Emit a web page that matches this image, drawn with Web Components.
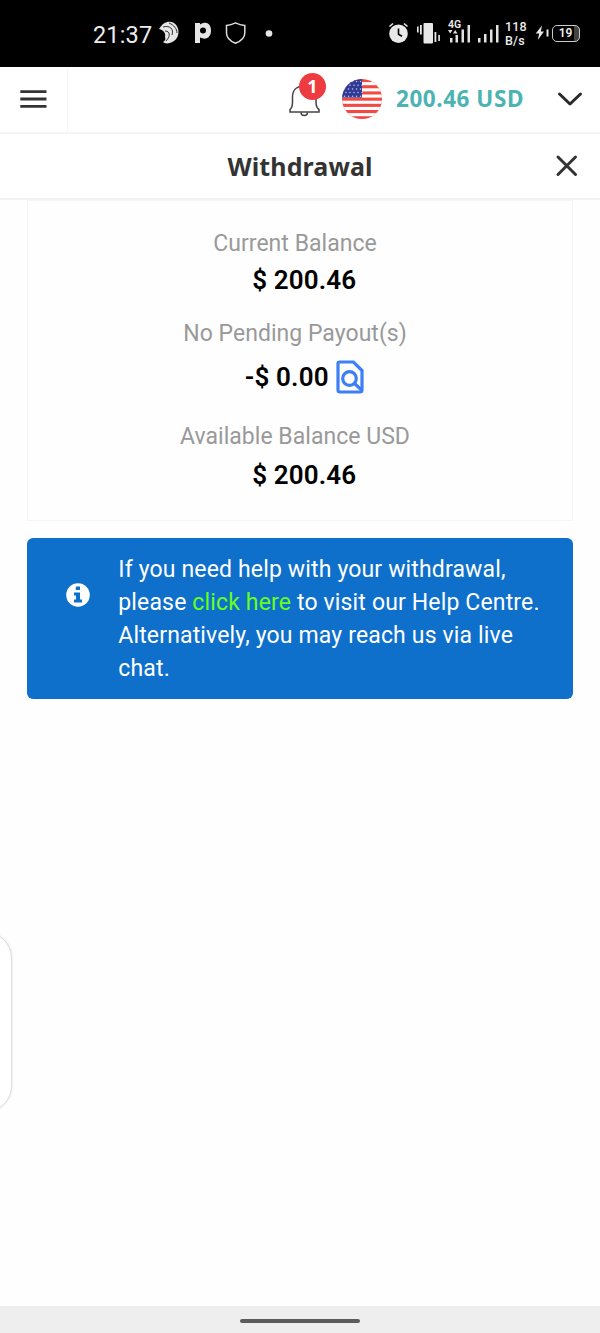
<!DOCTYPE html>
<html lang="en">
<head>
<meta charset="utf-8">
<title>Withdrawal</title>
<style>
  html, body {
    margin: 0;
    background: #fefefe;
    font-family: Roboto, sans-serif;
  }
</style>
</head>
<body>
<withdrawal-page></withdrawal-page>

<script>
// status-bar

class StatusBar extends HTMLElement {
  connectedCallback() {
    this._root = this.attachShadow({ mode: "open" });
    this._root.innerHTML = `
      <span class="time">${this.getAttribute("time")}</span>
      <svg class="apps" width="120" height="40" viewBox="0 0 120 40">
        <path d="M-1 16C3 9 9 7 14 10C20 14 20 24 14 28C10 31 5 31 3 29C5 28 6 26 5 24C6 21 4 17 -1 16Z" fill="#e6e6e6"/>
        <path fill-rule="evenodd" d="M35 10H40V11.500C46 7.500 51 10.500 51 17.500C51 24.500 46 27.500 40 24.500V30H35ZM43 14.500A3 3 0 1 0 43 20.500A3 3 0 1 0 43 14.500Z" fill="#e6e6e6"/>
        <circle cx="109" cy="20.500" r="3.3" fill="#e6e6e6"/>
        <path d="M3 14C10 12 14 16 12 22M9 10C14 12 17 16 17 20M5 18C10 18 11 23 6 28" fill="none" stroke="#000" stroke-width=".8"/>
        <path d="M75.500 9.800Q80 12 84.800 12.500V20C84.800 25 80 28.500 75.500 30.300C71 28.500 66.500 25 66.500 20V12.500Q71 12 75.500 9.800Z" fill="none" stroke="#ddd" stroke-width="1.500"/>
      </svg>
      <span class="space"></span>
      <svg class="alarm" width="60" height="30" viewBox="0 0 60 30">
        <g fill="#e8e8e8">
          <circle cx="10.500" cy="14.700" r="9.300"/>
          <rect x="35.500" y="4" width="9.500" height="20.500" rx="1"/>
          <rect x="29" y="7.500" width="1.600" height="6"/>
          <rect x="32" y="6" width="1.800" height="9.500"/>
          <rect x="46.500" y="13" width="1.800" height="10"/>
          <rect x="50.300" y="16" width="1.600" height="6"/>
        </g>
        <path d="M1.500 7.500L5 4.500M16 4.500L19.500 7.500" stroke="#e8e8e8" stroke-width="1.600"/>
        <path d="M10.500 9.500V15.200L14 17.200" fill="none" stroke="#000" stroke-width="1.600"/>
      </svg>
      <div class="signal">
        <b>4G</b>
        <svg width="54" height="30" viewBox="0 0 54 30">
          <g fill="#e2e2e2">
            <path d="M0 11H4.500L2.200 14.500ZM5 14.500H9.500L7.200 11Z"/>
            <rect x="2" y="19" width="2.500" height="4.500"/>
            <rect x="7.500" y="16" width="2.500" height="7.500"/>
            <rect x="13.500" y="10.500" width="2.500" height="13"/>
            <rect x="19.500" y="6" width="2.500" height="17.500"/>
            <rect x="30" y="19" width="2.500" height="4.500"/>
            <rect x="36" y="15" width="2.500" height="8.500"/>
            <rect x="42" y="10.500" width="2.500" height="13"/>
            <rect x="48" y="6" width="2.500" height="17.500"/>
          </g>
        </svg>
      </div>
      <div class="rate"><span>118</span><span>B/s</span></div>
      <svg class="bolt" width="16" height="20" viewBox="0 0 16 20">
        <path d="M6 2.500L-.3 10.500H3.200L1.800 17L8 8.500H4.800Z" fill="#e8e8e8"/>
        <rect x="10.500" y="6.500" width="2" height="7" fill="#e8e8e8"/>
      </svg>
      <div class="battery">${this.getAttribute("battery")}</div>
      <style>
        :host {
          background: #000;
          box-sizing: border-box;
          color: #ececec;
          display: flex;
          align-items: center;
          height: 66.5px;
          padding: 0 20px 0 93px;
        }

        svg {
          display: block;
          flex: none;
          overflow: visible;
        }

        .time {
          font-size: 23.5px;
          letter-spacing: 0.15px;
          width: 60px;
          margin-top: 3px;
          white-space: nowrap;
        }

        .apps {
          margin-left: 7px;
        }

        .space {
          flex: 1;
        }

        .alarm {
          margin-top: 2px;
        }

        .signal {
          display: grid;
          width: 57px;
          margin-top: 2px;
        }

        .signal > * {
          grid-area: 1 / 1;
        }

        .signal b {
          font-size: 10.5px;
          line-height: 11px;
          font-weight: 600;
        }

        .rate {
          display: flex;
          flex-direction: column;
          font-size: 12.5px;
          font-weight: 500;
          letter-spacing: 0.2px;
          line-height: 13.3px;
          width: 31px;
          margin-top: 1px;
        }

        .battery {
          border: 1.5px solid #ccc;
          border-radius: 5px;
          box-sizing: border-box;
          background: linear-gradient(90deg, transparent 80%, #444 80%);
          font-size: 12px;
          font-weight: 600;
          line-height: 15px;
          width: 28px;
          height: 17px;
          padding-right: 1px;
          text-align: center;
        }
      </style>
    `;
  }
}

customElements.define("status-bar", StatusBar);

// account-header

class AccountHeader extends HTMLElement {
  connectedCallback() {
    var stripes = "";
    for (var i = 0; i < 6; i++) {
      stripes += `<rect y="${3.1 + i * 6.2}" width="40" height="3.1" fill="#fff"/>`;
    }
    var stars = "";
    for (var r = 0; r < 5; r++) {
      for (var c = 0; c < 5; c++) {
        stars += `<circle cx="${2.5 + c * 4 + (r % 2) * 1.5}" cy="${2.5 + r * 3.7}" r=".75"/>`;
      }
    }
    this._root = this.attachShadow({ mode: "open" });
    this._root.innerHTML = `
      <div class="menu">
        <svg width="28" height="20" viewBox="0 0 28 20"><path d="M.3 2.700H26.500M.3 10H26.500M.3 17.300H26.500" stroke="#333" stroke-width="2.800"/></svg>
      </div>
      <div class="bell">
        <svg width="34" height="38" viewBox="0 0 34 38" fill="none" stroke="#444" stroke-width="1.500">
          <path d="M2 32V29.500C4 28 4.500 26 4.500 22V17C4.500 10 9 6 16 6S28 10 28 17V22C28 26 28.500 28 31 29.500V32Z"/>
          <path d="M13 32.500C13 36.500 19.500 36.500 19.500 32.500"/>
        </svg>
        <span>${this.getAttribute("alerts")}</span>
      </div>
      <svg class="flag" width="40" height="40" viewBox="0 0 40 40">
        <rect width="40" height="40" fill="#f24a43"/>
        ${stripes}
        <rect width="20" height="18.600" fill="#2f3a94"/>
        <g fill="#c5c9e8">${stars}</g>
      </svg>
      <span class="balance">${this.getAttribute("balance")}</span>
      <svg width="26" height="16" viewBox="0 0 26 16"><path d="M2.500 3L13 13L23.500 3" fill="none" stroke="#292929" stroke-width="3" stroke-linecap="round" stroke-linejoin="round"/></svg>
      <style>
        :host {
          background: #fff;
          border-bottom: 2px solid #f5f5f5;
          box-sizing: border-box;
          display: flex;
          align-items: center;
          height: 67px;
          padding-right: 17px;
        }

        svg {
          display: block;
          flex: none;
        }

        .menu {
          align-self: stretch;
          border-right: 1.5px solid #f5f5f5;
          box-sizing: border-box;
          display: flex;
          align-items: center;
          padding-left: 20px;
          margin-right: auto;
          width: 68px;
        }

        .bell {
          position: relative;
          margin-right: 20px;
        }

        .bell span {
          background: #ee3b40;
          border-radius: 50%;
          color: #fff;
          font: 700 18px/27px "Noto Sans", sans-serif;
          width: 27px;
          height: 27px;
          position: absolute;
          left: 11px;
          top: -7px;
          text-align: center;
        }

        .flag {
          border-radius: 50%;
          margin-right: 14px;
        }

        .balance {
          color: #4bb4b3;
          font: 700 22.5px/30px "Noto Sans", sans-serif;
          letter-spacing: 0.55px;
          margin-top: -1px;
          width: 161px;
          white-space: nowrap;
        }
      </style>
    `;
  }
}

customElements.define("account-header", AccountHeader);

// page-title

class PageTitle extends HTMLElement {
  connectedCallback() {
    this._root = this.attachShadow({ mode: "open" });
    this._root.innerHTML = `
      <h1><slot></slot></h1>
      <svg width="24" height="24" viewBox="0 0 24 24"><path d="M3 3L20.500 20.500M20.500 3L3 20.500" stroke="#333" stroke-width="3" stroke-linecap="round"/></svg>
      <style>
        :host {
          background: #fff;
          border-bottom: 2px solid #f3f3f3;
          box-sizing: border-box;
          display: grid;
          grid-template-columns: 1fr auto 1fr;
          align-items: center;
          height: 66px;
          padding-right: 21px;
          padding-left: 21px;
        }

        h1 {
          color: #333;
          font: 700 25px/34px "Noto Sans", sans-serif;
          grid-column: 2;
          letter-spacing: 0.1px;
          margin: 0;
        }

        svg {
          justify-self: end;
        }
      </style>
    `;
  }
}

customElements.define("page-title", PageTitle);

// balance-item

class BalanceItem extends HTMLElement {
  connectedCallback() {
    this._root = this.attachShadow({ mode: "open" });
    this._root.innerHTML = `
      <p class="label">${this.getAttribute("label")}</p>
      <p class="amount"><span>${this.getAttribute("amount")}</span><slot></slot></p>
      <style>
        :host {
          display: block;
        }

        p {
          margin: 0;
        }

        .label {
          color: #999;
          font-size: 23px;
          letter-spacing: 0.03px;
          line-height: 30px;
          padding-right: 10px;
          padding-top: 1px;
          text-align: center;
        }

        .amount {
          box-sizing: border-box;
          color: #000;
          display: flex;
          align-items: center;
          justify-content: center;
          font-size: 26px;
          font-weight: 600;
          gap: 7px;
          height: var(--amount-height, 43px);
          letter-spacing: 0.15px;
          padding-bottom: 2px;
          padding-left: 8.5px;
        }
      </style>
    `;
  }
}

customElements.define("balance-item", BalanceItem);

// help-notice

class HelpNotice extends HTMLElement {
  connectedCallback() {
    this._root = this.attachShadow({ mode: "open" });
    this._root.innerHTML = `
      <svg width="24" height="24" viewBox="0 0 24 24">
        <circle cx="12" cy="12" r="11.800" fill="#fff"/>
        <path d="M9.800 3.500H14V7H9.800ZM8 9.500H14V16.500H16V19.500H8V16.500H10V12.500H8Z" fill="#0e70cb"/>
      </svg>
      <p><slot></slot></p>
      <style>
        :host {
          background: #0e70cb;
          border-radius: 6px;
          box-sizing: border-box;
          color: #fff;
          display: flex;
          align-items: flex-start;
          height: 161px;
          padding: 16px 0 0 39px;
        }

        svg {
          flex: none;
          margin-top: 29px;
        }

        p {
          font-size: 23px;
          letter-spacing: 0.15px;
          line-height: 32.7px;
          margin: 0.4px 0 0 28.3px;
          white-space: nowrap;
        }

        ::slotted(a) {
          color: #66ff1c;
          text-decoration: none;
        }
      </style>
    `;
  }
}

customElements.define("help-notice", HelpNotice);

// withdrawal-page

class WithdrawalPage extends HTMLElement {
  connectedCallback() {
    this._root = this.attachShadow({ mode: "open" });
    this._root.innerHTML = `
      <status-bar time="21:37" battery="19"></status-bar>
      <account-header alerts="1" balance="200.46 USD"></account-header>
      <page-title>Withdrawal</page-title>
      <main>
        <section>
          <balance-item label="Current Balance" amount="$ 200.46"></balance-item>
          <balance-item class="pending" label="No Pending Payout(s)" amount="-$ 0.00">
            <svg width="28" height="34" viewBox="0 0 28 34" fill="none" stroke="#3d7ff5" stroke-width="3.200">
              <path d="M3.500 2H17.500L26 10.500V30Q26 32 24 32H4Q2 32 2 30V3.500Q2 2 3.500 2Z"/>
              <circle cx="13.500" cy="18.500" r="6.800"/>
              <path d="M18 23L26 30.500"/>
            </svg>
          </balance-item>
          <balance-item class="available" label="Available Balance USD" amount="$ 200.46"></balance-item>
        </section>
        <help-notice>If you need help with your withdrawal,<br>please <a href="#">click here</a> to visit our Help Centre.<br>Alternatively, you may reach us via live<br>chat.</help-notice>
      </main>
      <div class="drawer"></div>
      <footer><i></i></footer>
      <style>
        :host {
          display: flex;
          flex-direction: column;
          height: 1333px;
          overflow: hidden;
          position: relative;
        }

        main {
          flex: 1;
          padding: 0 27px;
        }

        section {
          border: 1px solid #f6f6f6;
          box-sizing: border-box;
          display: flex;
          flex-direction: column;
          gap: 16px;
          height: 321px;
          margin-bottom: 17.5px;
          padding-top: 27.5px;
        }

        section svg {
          display: block;
        }

        .pending {
          --amount-height: 57px;
        }

        .available {
          --amount-height: 47px;
          margin-top: -1px;
        }

        /* edge of the collapsed side drawer */
        .drawer {
          background: #fff;
          border: 1px solid #ddd;
          border-radius: 26px;
          box-shadow: 0 0 3px rgb(0,0,0,0.1);
          box-sizing: border-box;
          height: 180px;
          position: absolute;
          left: -48px;
          top: 932px;
          width: 60px;
        }

        footer {
          background: #eee;
          display: flex;
          justify-content: center;
          align-items: center;
          height: 27px;
        }

        footer i {
          background: #5c5c5c;
          border-radius: 2px;
          height: 3.5px;
          margin-top: 3px;
          width: 120px;
        }
      </style>
    `;
  }
}

customElements.define("withdrawal-page", WithdrawalPage);
</script>
</body>
</html>
